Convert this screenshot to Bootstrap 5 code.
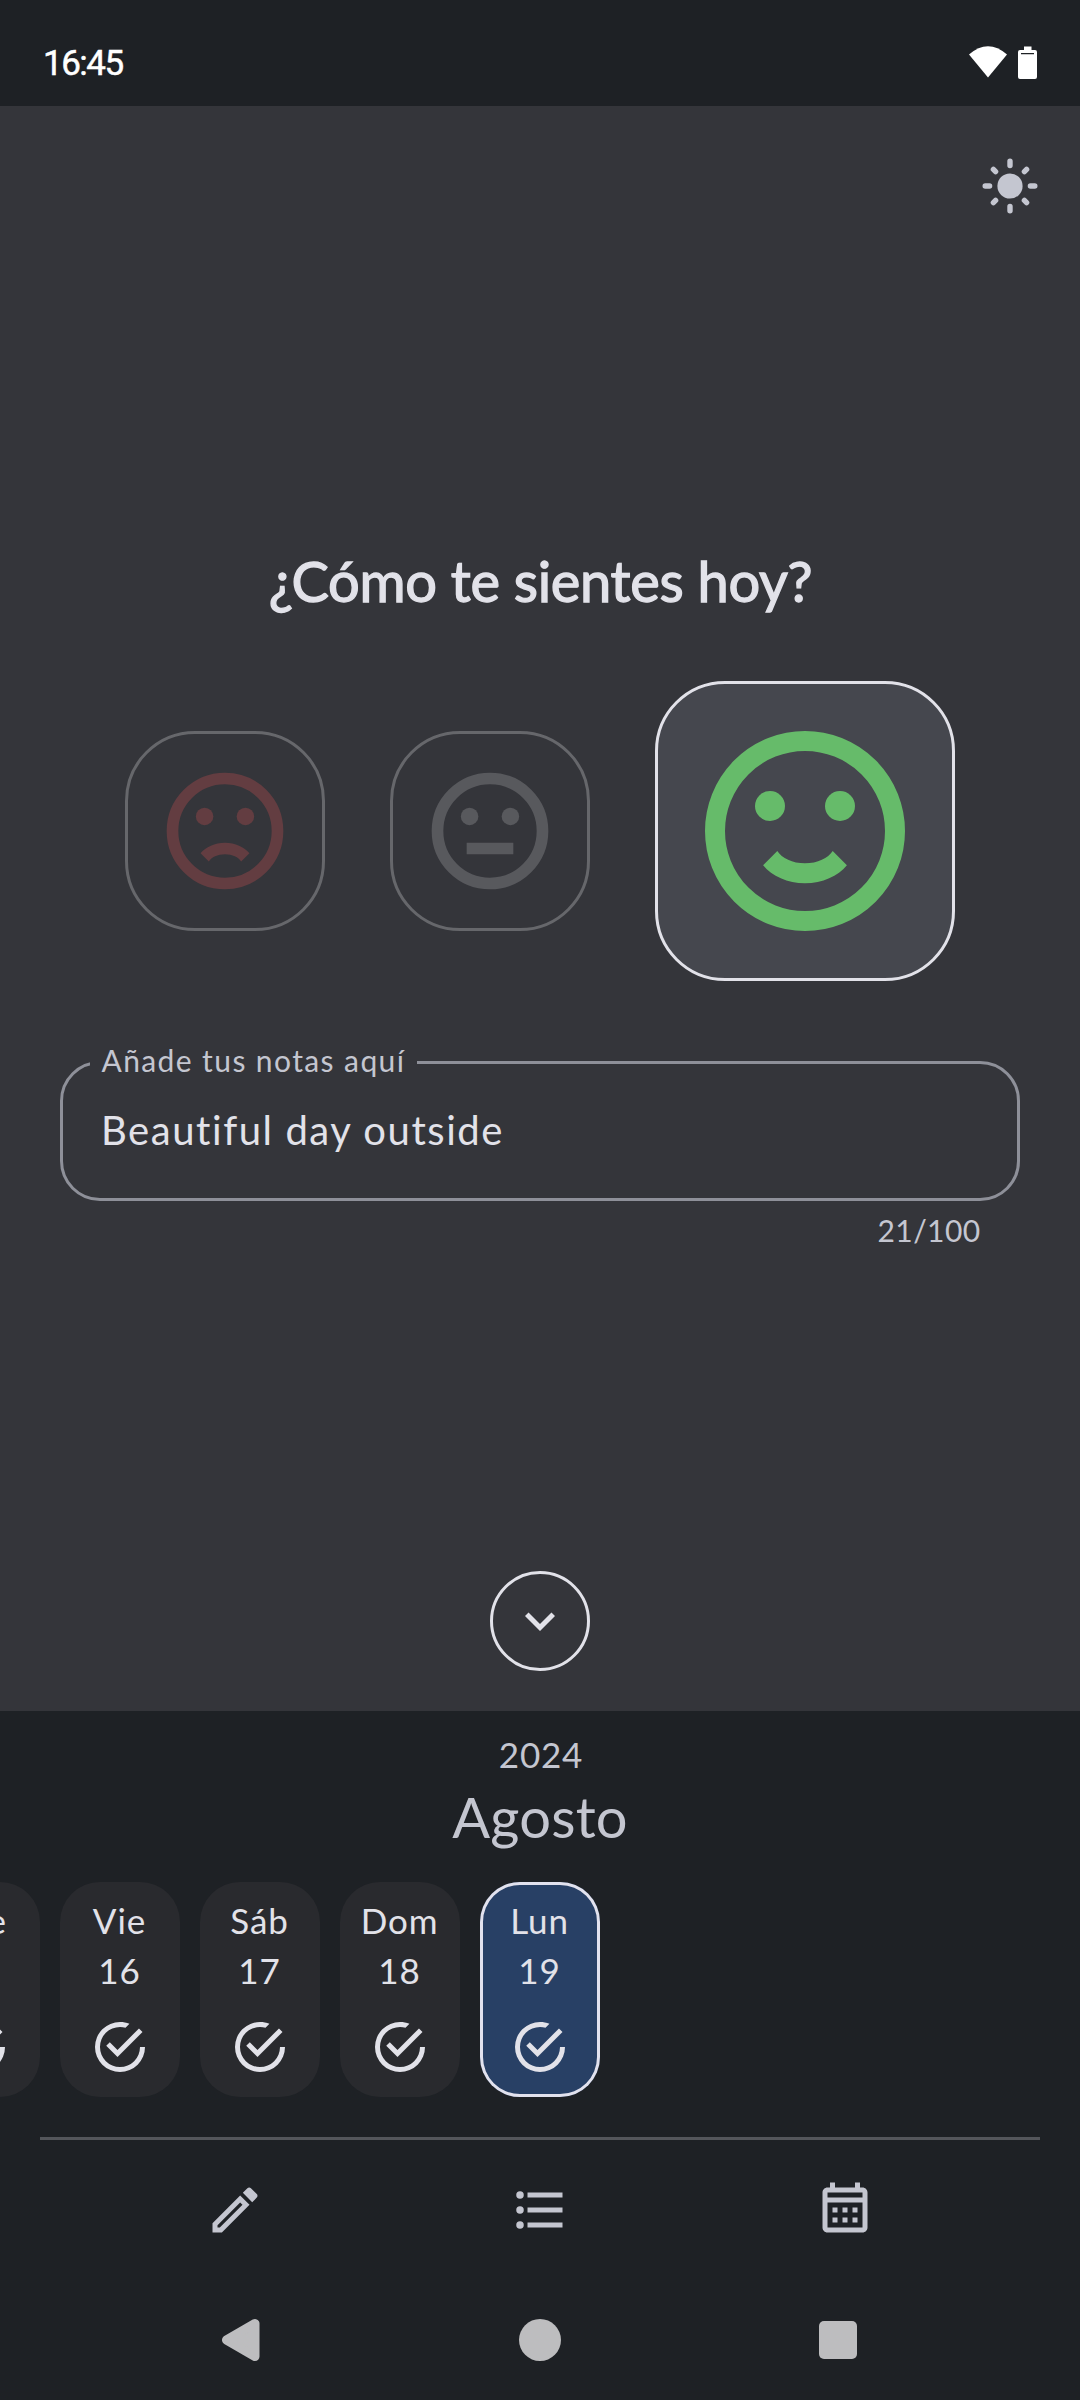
<!DOCTYPE html>
<html lang="es" data-bs-theme="dark">
<head>
<meta charset="utf-8">
<meta name="viewport" content="width=device-width, initial-scale=1">
<title>¿Cómo te sientes hoy?</title>
<link href="https://cdn.jsdelivr.net/npm/bootstrap@5.3.0/dist/css/bootstrap.min.css" rel="stylesheet">
<style>
  :root {
    --ink: #e2e2e9;
    --ink-soft: #c4c6d0;
    --surface: #34353a;
    --base: #1e2125;
    --outline: #8e9099;
  }
  body { width: 1080px; height: 2400px; overflow: hidden; background: var(--base); color: var(--ink); font-family: Lato, "Open Sans", sans-serif; font-weight: 400; }
  svg { display: block; flex: none; }

  .status-bar { height: 106px; padding: 38px 43px 0 43px; color: #fff; }
  .clock { margin-top: 1px; font: 400 35px/50px Roboto, sans-serif; letter-spacing: -1.5px; -webkit-text-stroke: .5px #fff; }
  .status-icons { height: 50px; }

  .mood-screen { height: 1605px; background: var(--surface); }
  .top-actions { height: 140px; padding: 20px 10px 0 0; }
  .theme-btn { width: 120px; height: 120px; color: var(--ink-soft); }
  .question { margin: 300px 0 65px; padding-left: 1px; color: var(--ink); font-size: 56px; line-height: 70px; font-weight: 400; letter-spacing: -.3px; -webkit-text-stroke: 1.3px var(--ink); }

  .moods { height: 300px; gap: 65px; }
  .mood { width: 200px; height: 200px; padding: 0; border: 3px solid #66676b; border-radius: 70px; }
  .mood.sad { color: #633d41; }
  .mood.neutral { color: #58595d; }
  .mood.happy { width: 300px; height: 300px; color: #66bb6a; background: #45474e; border-color: var(--ink); }

  .note-area { margin: 80px 60px 0; }
  .note-box { height: 140px; padding: 40.5px 37px 0 38px; border: 3px solid var(--outline); border-radius: 40px; }
  .note-label { left: 27px; top: -22px; width: 327px; height: 36px; padding-left: 11.5px; background: var(--surface); color: var(--ink-soft); font-size: 30px; line-height: 37px; letter-spacing: 1.4px; white-space: nowrap; }
  .note-input, .note-input:focus { height: 50px; padding: 0; border: 0; border-radius: 0; background: transparent; box-shadow: none; color: var(--ink); font-size: 40px; line-height: 50px; letter-spacing: 1.56px; }
  .note-count { margin-top: 9.4px; padding-right: 39.5px; color: var(--ink-soft); font-size: 30px; line-height: 40px; letter-spacing: .4px; }
  .collapse-btn { width: 100px; height: 100px; padding: 0; margin-bottom: 40px; border: 3px solid var(--ink); color: var(--ink); }

  .calendar-strip { height: 426px; padding-top: 17.5px; color: var(--ink-soft); }
  .year { padding-left: 2px; font-size: 35px; line-height: 50px; letter-spacing: .8px; }
  .month { margin-top: 8.5px; font-size: 56px; line-height: 60px; letter-spacing: .2px; }
  .days { margin: 35px 0 0 -80px; gap: 20px; }
  .day { flex: none; width: 120px; height: 215px; padding-top: 12.5px; border-radius: 40px; background: #292a2e; color: var(--ink); font-size: 35px; line-height: 50px; letter-spacing: .9px; }
  .day span { margin-right: 1px; }
  .day svg { margin-top: 22.5px; }
  .day.selected { background: #284065; box-shadow: inset 0 0 0 3px #e2e2ee; }

  .divider { height: 2.5px; margin: 0 40px; background: #54565b; }
  .tabs { padding: 40.5px 82.5px 0; color: var(--ink-soft); }
  .tabs a { color: inherit; }
  .system-nav { padding: 70px 92.5px 0 92px; color: #bdbdbf; }
</style>
<script src="https://cdn.jsdelivr.net/npm/bootstrap@5.3.0/dist/js/bootstrap.bundle.min.js"></script>
</head>
<body>
<svg width="0" height="0" class="position-absolute" aria-hidden="true">
  <symbol id="check" viewBox="0 0 24 24"><path fill="currentColor" d="M20,12A8,8 0 0,1 12,20A8,8 0 0,1 4,12A8,8 0 0,1 12,4C12.76,4 13.5,4.11 14.2,4.31L15.77,2.74C14.61,2.26 13.34,2 12,2A10,10 0 0,0 2,12A10,10 0 0,0 12,22A10,10 0 0,0 22,12H20M7.91,10.08L6.5,11.5L11,16L21,6L19.59,4.58L11,13.17L7.91,10.08Z"/></symbol>
  <symbol id="face" viewBox="0 0 24 24"><circle cx="12" cy="12" r="9" fill="none" stroke="currentColor" stroke-width="2"/><circle cx="8.5" cy="9.5" r="1.5" fill="currentColor"/><circle cx="15.5" cy="9.5" r="1.5" fill="currentColor"/></symbol>
</svg>

<header class="status-bar d-flex justify-content-between">
  <span class="clock">16:45</span>
  <div class="status-icons d-flex">
    <svg width="70" height="50" viewBox="967 38 70 50" fill="#fff"><path d="M969 54.5Q988 38 1007 54.5L988 77.5Z"/><path fill-rule="evenodd" d="M1024 46.5H1031.5V50H1035Q1037 50 1037 52V77Q1037 79 1035 79H1020Q1018 79 1018 77V52Q1018 50 1020 50H1024ZM1021 53V54.3H1034V53Z"/></svg>
  </div>
</header>

<main class="mood-screen d-flex flex-column">
  <div class="top-actions d-flex justify-content-end">
    <button class="btn theme-btn p-0 border-0 d-flex align-items-center justify-content-center" aria-label="Tema">
      <svg width="60" height="60" viewBox="-30 -30 60 60"><circle r="12.6" fill="currentColor"/><g stroke="currentColor" stroke-width="5.4" stroke-linecap="round"><path d="M0-24.8V-20.4M0 20.4V24.8M-24.8 0H-20.4M20.4 0H24.8M-16.6-16.6L-14.4-14.4M16.6-16.6L14.4-14.4M-16.6 16.6L-14.4 14.4M16.6 16.6L14.4 14.4"/></g></svg>
    </button>
  </div>

  <h1 class="question text-center">¿Cómo te sientes hoy?</h1>

  <div class="moods d-flex align-items-center justify-content-center">
    <button class="btn mood sad d-flex align-items-center justify-content-center" aria-label="Mal">
      <svg width="140" height="140" viewBox="0 0 24 24"><use href="#face"/><path fill="currentColor" d="M12,14C13.75,14 15.29,14.72 16.19,15.81L14.77,17.23C14.32,16.5 13.25,16 12,16C10.75,16 9.68,16.5 9.23,17.23L7.81,15.81C8.71,14.72 10.25,14 12,14Z"/></svg>
    </button>
    <button class="btn mood neutral d-flex align-items-center justify-content-center" aria-label="Normal">
      <svg width="140" height="140" viewBox="0 0 24 24"><use href="#face"/><path fill="currentColor" d="M8,14H16V16H8Z"/></svg>
    </button>
    <button class="btn mood happy d-flex align-items-center justify-content-center" aria-label="Bien">
      <svg width="240" height="240" viewBox="0 0 24 24"><use href="#face"/><path fill="currentColor" d="M12,17.23C10.25,17.23 8.71,16.5 7.81,15.42L9.23,14C9.68,14.72 10.75,15.23 12,15.23C13.25,15.23 14.32,14.72 14.77,14L16.19,15.42C15.29,16.5 13.75,17.23 12,17.23Z"/></svg>
    </button>
  </div>

  <div class="note-area">
    <div class="note-box position-relative">
      <label for="note" class="note-label position-absolute">Añade tus notas aquí</label>
      <input id="note" class="form-control note-input" type="text" maxlength="100" value="Beautiful day outside">
    </div>
    <div class="note-count text-end">21/100</div>
  </div>

  <button class="btn collapse-btn rounded-circle mt-auto mx-auto d-flex align-items-center justify-content-center" aria-label="Contraer">
    <svg width="60" height="60" viewBox="0 0 24 24"><path fill="currentColor" d="M7.41,8.58L12,13.17L16.59,8.58L18,10L12,16L6,10L7.41,8.58Z"/></svg>
  </button>
</main>

<section class="calendar-strip text-center overflow-hidden">
  <div class="year">2024</div>
  <div class="month">Agosto</div>
  <div class="days d-flex">
    <div class="day d-flex flex-column align-items-center"><span>Jue</span><span>15</span><svg width="60" height="60"><use href="#check"/></svg></div>
    <div class="day d-flex flex-column align-items-center"><span>Vie</span><span>16</span><svg width="60" height="60"><use href="#check"/></svg></div>
    <div class="day d-flex flex-column align-items-center"><span>Sáb</span><span>17</span><svg width="60" height="60"><use href="#check"/></svg></div>
    <div class="day d-flex flex-column align-items-center"><span>Dom</span><span>18</span><svg width="60" height="60"><use href="#check"/></svg></div>
    <div class="day selected d-flex flex-column align-items-center"><span>Lun</span><span>19</span><svg width="60" height="60"><use href="#check"/></svg></div>
  </div>
</section>

<div class="divider"></div>

<nav class="tabs d-flex">
  <a href="#" class="flex-fill d-flex justify-content-center" aria-label="Editar"><svg width="60" height="60" viewBox="0 0 24 24"><path fill="currentColor" d="M14.06,9L15,9.94L5.92,19H5V18.08L14.06,9M17.66,3C17.41,3 17.15,3.1 16.96,3.29L15.13,5.12L18.88,8.87L20.71,7.04C21.1,6.65 21.1,6 20.71,5.63L18.37,3.29C18.17,3.09 17.92,3 17.66,3M14.06,6.19L3,17.25V21H6.75L17.81,9.94L14.06,6.19Z"/></svg></a>
  <a href="#" class="flex-fill d-flex justify-content-center" aria-label="Lista"><svg width="60" height="60" viewBox="0 0 24 24" fill="currentColor"><path d="M7,5H21V7H7V5M7,13V11H21V13H7M7,19V17H21V19H7"/><circle cx="4" cy="6" r="1.5"/><circle cx="4" cy="12" r="1.5"/><circle cx="4" cy="18" r="1.5"/></svg></a>
  <a href="#" class="flex-fill d-flex justify-content-center" aria-label="Calendario"><svg width="60" height="60" viewBox="0 0 24 24"><path fill="currentColor" d="M7 11H9V13H7V11M21 5V19C21 20.11 20.11 21 19 21H5C3.89 21 3 20.1 3 19V5C3 3.9 3.9 3 5 3H6V1H8V3H16V1H18V3H19C20.1 3 21 3.9 21 5M5 5V7H19V5H5M19 19V9H5V19H19M15 13V11H17V13H15M11 13V11H13V13H11M7 15H9V17H7V15M15 17V15H17V17H15M11 17V15H13V17H11Z"/></svg></a>
</nav>

<div class="system-nav d-flex">
  <div class="flex-fill d-flex justify-content-center"><svg width="60" height="60" viewBox="0 0 60 60"><path d="M15.5 30L44 13.5V46.5Z" fill="currentColor" stroke="currentColor" stroke-width="9" stroke-linejoin="round"/></svg></div>
  <div class="flex-fill d-flex justify-content-center"><svg width="60" height="60" viewBox="0 0 60 60"><circle cx="30" cy="30" r="21" fill="currentColor"/></svg></div>
  <div class="flex-fill d-flex justify-content-center"><svg width="60" height="60" viewBox="0 0 60 60"><rect x="11" y="11" width="38" height="38" rx="5" fill="currentColor"/></svg></div>
</div>
</body>
</html>
